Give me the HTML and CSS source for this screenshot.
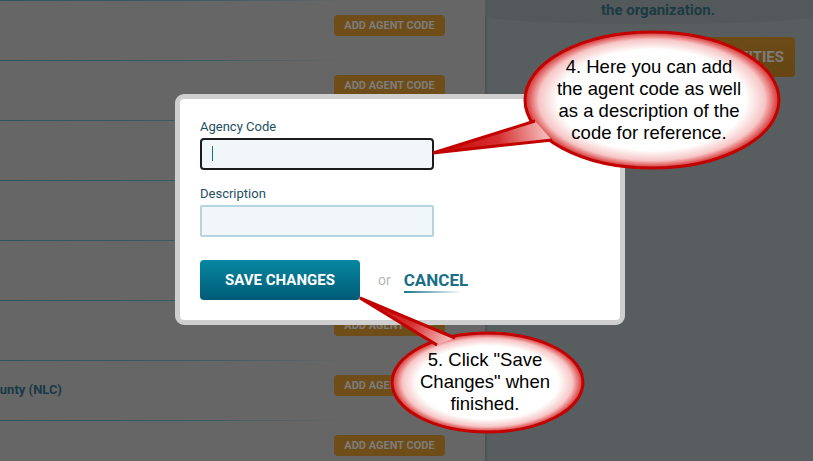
FILE: index.html
```html
<!DOCTYPE html>
<html lang="en">
<head>
    <meta charset="UTF-8">
    <meta name="viewport" content="width=device-width, initial-scale=1.0">
    <title>Agency Codes - Edit</title>
    <link rel="stylesheet" href="styles.css">
</head>
<body>

    <div class="screen">
        <!-- Agency list (dimmed behind the modal) -->
        <section class="agency-list">
            <div class="agency-row"><span class="agency-name"></span><button class="btn-agent">ADD AGENT CODE</button></div>
            <div class="agency-row"><span class="agency-name"></span><button class="btn-agent">ADD AGENT CODE</button></div>
            <div class="agency-row"><span class="agency-name"></span><button class="btn-agent">ADD AGENT CODE</button></div>
            <div class="agency-row"><span class="agency-name"></span><button class="btn-agent">ADD AGENT CODE</button></div>
            <div class="agency-row"><span class="agency-name"></span><button class="btn-agent">ADD AGENT CODE</button></div>
            <div class="agency-row"><span class="agency-name"></span><button class="btn-agent">ADD AGENT CODE</button></div>
            <div class="agency-row"><span class="agency-name cut">County (NLC)</span><button class="btn-agent">ADD AGENT CODE</button></div>
            <div class="agency-row"><span class="agency-name"></span><button class="btn-agent">ADD AGENT CODE</button></div>
        </section>

        <aside class="side-panel">
            <div class="side-intro">
                <p>the organization.</p>
            </div>
            <div class="side-actions">
                <button class="btn-entities">MANAGE ENTITIES</button>
            </div>
        </aside>
    </div>

    <!-- Edit agent code modal -->
    <div class="modal">
        <label for="agencyCode">Agency Code</label>
        <div class="field-wrap">
            <input type="text" id="agencyCode" class="field is-focused">
            <span class="caret"></span>
        </div>

        <label for="agencyDesc" class="second">Description</label>
        <input type="text" id="agencyDesc" class="field">

        <div class="modal-actions">
            <button class="btn-save">SAVE CHANGES</button>
            <span class="or">or</span>
            <a class="cancel-link">CANCEL</a>
        </div>
    </div>

    <!-- Tutorial callouts -->
    <svg class="callouts" width="813" height="461" viewBox="0 0 813 461">
        <defs>
            <radialGradient id="bubbleFill" cx="0.5" cy="0.5" r="0.5">
                <stop offset="0" stop-color="#ffffff"/>
                <stop offset="0.74" stop-color="#ffffff"/>
                <stop offset="0.89" stop-color="#f7c6c6"/>
                <stop offset="1" stop-color="#d42c2c"/>
            </radialGradient>
            <linearGradient id="tailOne" gradientUnits="userSpaceOnUse" x1="433" y1="153" x2="543" y2="130">
                <stop offset="0" stop-color="#c40000"/>
                <stop offset="0.6" stop-color="#d63030"/>
                <stop offset="1" stop-color="#f3b4b4"/>
            </linearGradient>
            <linearGradient id="tailTwo" gradientUnits="userSpaceOnUse" x1="360" y1="298" x2="446" y2="341">
                <stop offset="0" stop-color="#c40000"/>
                <stop offset="0.6" stop-color="#d63030"/>
                <stop offset="1" stop-color="#f3b4b4"/>
            </linearGradient>
        </defs>

        <ellipse cx="652" cy="100" rx="127" ry="68" fill="url(#bubbleFill)" stroke="#c20000" stroke-width="3"/>
        <path d="M535 121 L433 153 L552 140" fill="url(#tailOne)" stroke="#c20000" stroke-width="3" stroke-linejoin="miter"/>

        <ellipse cx="487.5" cy="382.5" rx="95.5" ry="49.5" fill="url(#bubbleFill)" stroke="#c20000" stroke-width="3"/>
        <path d="M437 345 L360 298 L455 338" fill="url(#tailTwo)" stroke="#c20000" stroke-width="3" stroke-linejoin="miter"/>
    </svg>

    <div class="callout-text callout-one">
        4. Here you can add<br>the agent code as well<br>as a description of the<br>code for reference.
    </div>
    <div class="callout-text callout-two">
        5. Click "Save<br>Changes" when<br>finished.
    </div>

</body>
</html>
```

FILE: styles.css
```css
:root {
    --dim-bg: #666666; --panel-bg: #585e60; --panel-top: #53595b;
    --teal: #1a6f86; --teal-dark: #1d4f60; --line: #2d5462;
    --brown: #6f4d19; --brown-text: #7c7c7c; --field-bg: #f1f6f9;
    --field-border: #b4d5e0; --bubble-red: #c20000;
}
body {
    margin: 0; width: 813px; height: 461px; overflow: hidden;
    font-family: Roboto, 'Liberation Sans', sans-serif; position: relative;
}
.screen {
    display: grid; grid-template-columns: 485px 1fr;
    width: 813px; height: 461px; overflow: hidden;
}

/* Dimmed agency list */
.agency-list { background-color: var(--dim-bg); }
.agency-row {
    height: 60px; box-sizing: border-box; padding: 15px 40px 0 0;
    display: flex; justify-content: space-between; align-items: flex-start;
    background-image: linear-gradient(to right, var(--line) 0, #3f5c66 220px, var(--dim-bg) 345px);
    background-size: 100% 1px; background-repeat: no-repeat; background-position: top left;
}
.agency-name {
    font-size: 13px; font-weight: 700; line-height: 21px; padding-top: 4px;
    color: #163a48; white-space: nowrap;
}
.agency-name.cut { margin-left: -16px; }
.btn-agent {
    width: 111px; height: 21px; padding: 0; border: none; border-radius: 4px;
    background-color: var(--brown); color: var(--brown-text);
    font-family: Roboto, sans-serif; font-size: 11px; font-weight: 700;
}

/* Right side panel */
.side-panel {
    background-color: var(--panel-bg);
    box-shadow: inset 2px 0 2px rgba(0,0,0,0.12);
}
.side-intro {
    height: 24px; box-sizing: border-box; padding: 1px 0 0 18px;
    background-color: var(--panel-top);
    border-radius: 0 0 50% 50% / 0 0 8px 8px;
}
.side-intro p {
    margin: 0; text-align: center; font-size: 15px; font-weight: 700;
    line-height: 18px; color: #1c3a44;
}
.side-actions { display: flex; justify-content: flex-end; padding: 13px 18px 0 0; }
.btn-entities {
    width: 175px; height: 40px; border: none; border-radius: 4px;
    background: linear-gradient(#6c4b17, #654512); color: var(--brown-text);
    font-family: Roboto, sans-serif; font-size: 15px; font-weight: 700;
    text-align: right; padding: 0 11px 0 0;
}

/* Modal */
.modal {
    position: absolute; left: 175px; top: 94px; width: 450px; height: 231px;
    box-sizing: border-box; padding: 20px;
    background-color: #fff; border: 5px solid #cfcfcf; border-radius: 9px;
}
.modal label {
    display: block; font-size: 13px; line-height: 16px; color: var(--teal-dark);
    margin-bottom: 3px;
}
.modal label.second { margin-top: 16px; }
.field-wrap { position: relative; width: 234px; }
.field {
    display: block; width: 234px; height: 32px; box-sizing: border-box;
    border: 2px solid var(--field-border); border-radius: 2px;
    background-color: var(--field-bg); outline: none; padding: 0 10px;
}
.field.is-focused { border-color: #1c1c1c; border-radius: 4px; }
.caret {
    position: absolute; left: 12px; top: 8px; width: 1px; height: 15px;
    background-color: var(--teal);
}
.modal-actions { display: flex; align-items: center; margin-top: 23px; }
.btn-save {
    width: 160px; height: 40px; border: none; border-radius: 4px;
    background: linear-gradient(#0787a1, #005b76); color: #fff;
    font-family: Roboto, sans-serif; font-size: 15px; font-weight: 700;
}
.or { margin-left: 18px; font-size: 14px; color: #b9b9b9; }
.cancel-link {
    margin-left: 13px; padding: 3px 0; font-size: 17px; font-weight: 700;
    line-height: 20px; color: var(--teal); cursor: pointer;
    background-image: linear-gradient(to right, #1a7590, rgba(26,117,144,0));
    background-size: 58px 2px; background-repeat: no-repeat; background-position: left bottom;
}

/* Callouts */
.callouts { position: absolute; left: 0; top: 0; pointer-events: none; }
.callout-text {
    position: absolute; text-align: center; color: #000;
    font-family: 'Liberation Sans', Arial, sans-serif; font-size: 18.5px; line-height: 22px;
}
.callout-one { left: 529px; top: 56px; width: 240px; }
.callout-two { left: 385px; top: 349px; width: 200px; }
```
